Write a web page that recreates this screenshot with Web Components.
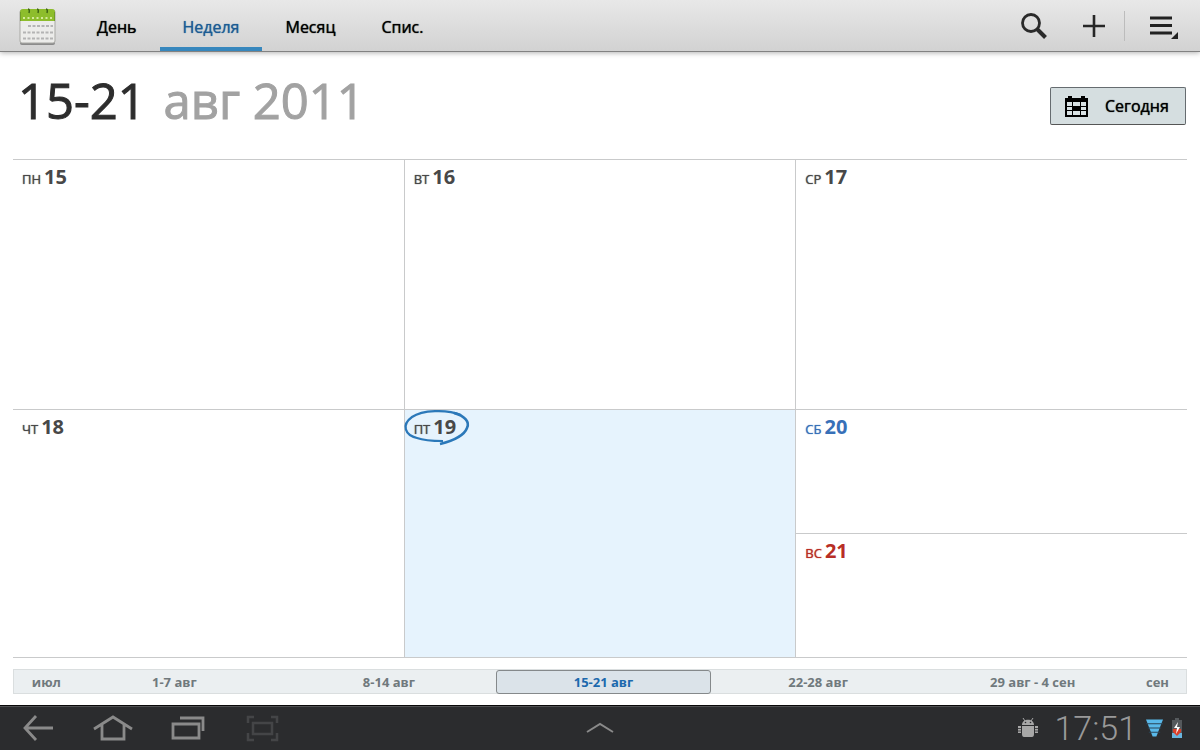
<!DOCTYPE html>
<html lang="ru">
<head>
<meta charset="utf-8">
<title>Календарь</title>
<style>
html, body { margin: 0; height: 100%; }
body { font-family: "Open Sans", "Noto Sans", sans-serif; background: #fff; color: #000; }
</style>
</head>
<body>
<calendar-app></calendar-app>
<script>
const define = (name, html, setup) => {
  const template = document.createElement('template');
  template.innerHTML = html;
  customElements.define(name, class extends HTMLElement {
    constructor() {
      super();
      this.attachShadow({ mode: 'open' }).append(template.content.cloneNode(true));
    }
    connectedCallback() { if (setup) setup(this, this.shadowRoot); }
  });
};

define('view-tab', `
<style>
:host { display: flex; }
button { all: unset; box-sizing: border-box; height: 51px; padding: 6px 23px 0; font-size: 16px; line-height: 40px; border-bottom: 4px solid transparent; cursor: pointer; white-space: nowrap; text-shadow: 0 0 1px currentColor; }
:host([selected]) button { color: #1c5c94; border-color: #3787bd; }
</style>
<button type="button"><slot></slot></button>`);

define('icon-button', `
<style>
:host { display: flex; }
button { all: unset; display: flex; align-items: center; justify-content: center; width: 100%; height: 100%; cursor: pointer; }
</style>
<button type="button"><slot></slot></button>`, (host, root) => {
  root.querySelector('button').setAttribute('aria-label', host.getAttribute('label'));
});

define('app-bar', `
<style>
:host { position: relative; z-index: 1; display: flex; align-items: center; flex: none; height: 51px; background: linear-gradient(#e8e8e8, #d2d2d2); border-bottom: 1px solid #828282; box-shadow: 0 1px 5px rgba(0,0,0,.3); }
.logo { width: 38px; height: 40px; margin: 2px 18px 0 18px; }
nav { display: flex; flex: 1; }
icon-button { width: 60px; height: 52px; }
.menu { width: 75px; }
i { width: 1px; height: 30px; background: #bcbcbc; }
svg { display: block; }
</style>
<svg class="logo" viewBox="0 0 38 40" aria-hidden="true">
  <rect x="2" y="4" width="35" height="34" rx="2" fill="#8b8b8b"/>
  <rect x="2" y="3" width="35" height="33" rx="2" fill="#ececea" stroke="#a9a9a5"/>
  <path d="M2 5q0-3 3-3h29q3 0 3 3v9H2z" fill="#8dbd2c"/>
  <path d="M2.500 5v9M36.500 5v9" stroke="#719d28"/>
  <path d="M10 2q2 0 1 4M19 2q2 0 1 4M28 2q2 0 1 4" stroke="#3f6513" stroke-width="1.500" fill="none"/>
  <path d="M5 11h29" stroke="#d5ea9c" stroke-width="2" stroke-dasharray="2 2.500"/>
  <path d="M10 19h25M5 25.500h30M5 31.500h30" stroke="#b4b4b4" stroke-width="2" stroke-dasharray="3 1.500"/>
</svg>
<nav aria-label="Вид">
  <view-tab>День</view-tab><view-tab selected>Неделя</view-tab><view-tab>Месяц</view-tab><view-tab>Спис.</view-tab>
</nav>
<icon-button label="Поиск"><svg width="28" height="28" viewBox="0 0 28 28" fill="none" stroke="#2a2a2a"><circle cx="11" cy="11" r="8.500" stroke-width="2.800"/><path d="M17 17l8.500 8.500" stroke-width="4"/></svg></icon-button>
<icon-button label="Добавить"><svg width="22" height="22" viewBox="0 0 22 22"><path d="M0 11h22M11 0v22" stroke="#262626" stroke-width="2.600"/></svg></icon-button>
<i></i>
<icon-button class="menu" label="Меню"><svg width="30" height="26" viewBox="0 0 30 26"><path d="M2 5h22M2 12.500h22M2 20h22" stroke="#222" stroke-width="2.800"/><path d="M30 19v7h-7z" fill="#222"/></svg></icon-button>`);

define('week-heading', `
<style>
:host { display: flex; justify-content: space-between; align-items: flex-start; height: 107px; flex: none; padding: 0 14px 0 18px; }
h1 { margin: 14px 0 0; font-size: 49px; line-height: 68px; font-weight: 400; color: #a2a2a2; white-space: nowrap; -webkit-text-stroke: 1px; }
strong { font-weight: 400; color: #2d2d2d; margin-right: 5px; }
button { box-sizing: border-box; display: flex; align-items: center; width: 136px; height: 38px; margin-top: 35px; padding: 0 0 0 14px; gap: 17px; background: #d5dee0; border: 1px solid #666c70; border-bottom-color: #555; border-radius: 2px; font: 400 16px/24px "Open Sans", "Noto Sans", sans-serif; text-shadow: 0 0 1px currentColor; color: #000; cursor: pointer; }
</style>
<h1><strong>15-21</strong> авг 2011</h1>
<button type="button">
  <svg width="23" height="21" viewBox="0 0 23 21" aria-hidden="true"><path d="M0 2h3V0h4v2h9V0h4v2h3v19H0z"/><path d="M2 6h5v4H2zM8 6h7v4H8zM16 6h5v4h-5zM2 11h5v3H2zM16 11h5v3h-5zM2 15h5v4H2zM8 15h7v4H8zM16 15h5v4h-5z" fill="#d9e2e4"/></svg>
  Сегодня
</button>`);

define('day-cell', `
<style>
:host { position: relative; display: block; min-width: 0; padding: 4px 8px 0 9px; color: #484848; }
:host([kind=sat]) { color: #3770b8; }
:host([kind=sun]) { color: #b82e25; }
time { display: flex; align-items: baseline; gap: 3px; font-size: 20px; line-height: 26px; font-weight: 700; }
span { font-size: 13px; font-weight: 400; text-shadow: 0 0 1px currentColor; }
svg { display: none; position: absolute; left: 0; top: 0; overflow: visible; }
:host([today]) svg { display: block; }
</style>
<time><span></span><slot></slot></time>
<svg width="66" height="36" viewBox="0 0 66 36" fill="none" stroke="#2b78b9" aria-hidden="true"><path d="M56 5C42-1 17 0 7 7C-4 15 0 25 12 28C20 31 29 31 38 31" stroke-width="2.200"/><path d="M49 3C60 6 65 12 62 18C59 26 47 31 35 34" stroke-width="2.600"/></svg>`, (host, root) => {
  root.querySelector('span').textContent = host.getAttribute('name');
});

define('week-grid', `
<style>
:host { flex: 1; display: grid; grid-template-columns: repeat(3, minmax(0, 1fr)); grid-template-rows: 249fr 123fr 123fr; gap: 1px; margin: 0 13px; background: #c9cacb; border: solid #c9cacb; border-width: 1px 0; }
day-cell { background: #fff; }
day-cell[today] { background: #e6f3fd; }
.tall { grid-row: 2 / span 2; }
.sun { grid-column: 3; grid-row: 3; }
</style>
<day-cell name="ПН">15</day-cell><day-cell name="ВТ">16</day-cell><day-cell name="СР">17</day-cell>
<day-cell class="tall" name="ЧТ">18</day-cell><day-cell class="tall" name="ПТ" today>19</day-cell><day-cell name="СБ" kind="sat">20</day-cell>
<day-cell class="sun" name="ВС" kind="sun">21</day-cell>`);

define('week-picker', `
<style>
:host { flex: none; display: grid; grid-template-columns: 53px repeat(5, 1fr) 46px; margin: 11px 13px; height: 23px; background: #ebeff1; border: 1px solid #dadedf; }
button { all: unset; box-sizing: border-box; text-align: center; font-size: 13px; line-height: 22px; font-weight: 700; color: #70797d; cursor: pointer; white-space: nowrap; }
.first { text-align: right; padding-right: 6px; }
.last { text-align: left; padding-left: 6px; }
.on { border: 1px solid #85898b; border-radius: 3px; background: #dbe3e9; color: #1c69ad; }
</style>
<button type="button" class="first">июл</button><button type="button">1-7 авг</button><button type="button">8-14 авг</button><button type="button" class="on" aria-current="true">15-21 авг</button><button type="button">22-28 авг</button><button type="button">29 авг - 4 сен</button><button type="button" class="last">сен</button>`);

define('system-bar', `
<style>
:host { flex: none; display: grid; grid-template-columns: 1fr auto 1fr; align-items: center; height: 44px; background: #2b2c2e; border-top: 1px solid #080808; box-shadow: inset 0 1px #505152; color: #999; }
nav, .status { display: flex; align-items: center; }
icon-button { width: 75px; height: 44px; }
.status { justify-content: flex-end; padding-right: 18px; }
time { font: 300 34px/42px Roboto, sans-serif; margin: 0 9px 0 16px; }
svg { display: block; overflow: visible; }
.battery { margin-left: 9px; }
</style>
<nav aria-label="Система">
  <icon-button label="Назад"><svg width="30" height="26" viewBox="0 0 30 26" fill="none" stroke="#8a8a8a" stroke-width="2.800"><path d="M13 1L2 13l11 12M2 13h28"/></svg></icon-button>
  <icon-button label="Домой"><svg width="40" height="26" viewBox="0 0 40 26" fill="none" stroke="#8a8a8a" stroke-width="2.800"><path d="M1 14L20 2l19 12M9 10v14h22V10"/></svg></icon-button>
  <icon-button label="Недавние"><svg width="34" height="24" viewBox="0 0 34 24" fill="none" stroke="#8a8a8a" stroke-width="2.800"><path d="M2 8h26v14H2zM9 2h23v13"/></svg></icon-button>
  <icon-button label="Снимок экрана"><svg width="32" height="26" viewBox="0 0 32 26" fill="none" stroke="#444547" stroke-width="2.500"><path d="M6 8h19v11H6zM1 8V2h6M24 2h6v6M30 18v7h-6M7 25H1v-7"/></svg></icon-button>
</nav>
<icon-button label="Развернуть"><svg width="28" height="10" viewBox="0 0 28 10" fill="none" stroke="#8a8a8a" stroke-width="2"><path d="M1 9L14 1l13 8"/></svg></icon-button>
<div class="status">
  <svg width="20" height="20" viewBox="0 0 20 20" fill="#a7a7a7" aria-hidden="true"><path d="M4 7C4 0 16 0 16 7zM4 8h12v8q0 3-2 3h-8q-2 0-2-3zM0 8h3v7H0zM17 8h3v7h-3z"/><path d="M5 0l2 3M15 0l-2 3" stroke="#a7a7a7"/><path d="M0 10.500h3M0 13h3M17 10.500h3M17 13h3" stroke="#2b2c2e" stroke-width=".8"/><circle cx="7.500" cy="4.500" r=".8" fill="#2b2c2e"/><circle cx="12.500" cy="4.500" r=".8" fill="#2b2c2e"/></svg>
  <time>17:51</time>
  <svg width="17" height="18" viewBox="0 0 18 18" aria-hidden="true"><path d="M0 0h18L11 18H7z" fill="#59b9ea"/><path d="M0 4.500h18M2 9h14M3 13.500h12" stroke="#2b4658" stroke-width="1.200"/></svg>
  <svg class="battery" width="10" height="20" viewBox="0 0 10 20" aria-hidden="true"><path d="M0 2h3V0h4v2h3v18H0z" fill="#55595c"/><path d="M0 15h10v5H0z" fill="#69b5df"/><path d="M1 11h8v3l-4 4-4-4z" fill="#d9402b"/><path d="M6 4L2 10h3l-1 6 4-7H5z" fill="#fff"/></svg>
</div>`);

define('calendar-app', `
<style>
:host { display: flex; flex-direction: column; min-height: 100%; height: 100%; }
</style>
<app-bar></app-bar><week-heading></week-heading><week-grid></week-grid><week-picker></week-picker><system-bar></system-bar>`);
</script>
</body>
</html>
